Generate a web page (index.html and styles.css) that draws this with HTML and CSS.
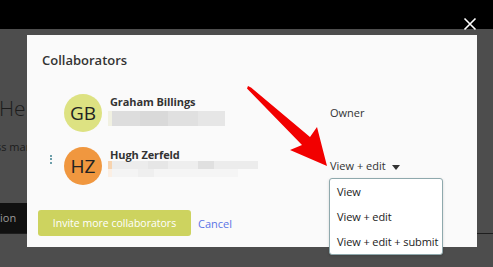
FILE: index.html
```html
<!DOCTYPE html>
<html>
<head>
<meta charset="utf-8">
<link rel="stylesheet" href="styles.css">
</head>
<body>
<div class="page">
  <div class="topbar"></div>
  <div class="behind">
    <div class="hello">Hello</div>
    <div class="sub">ss management</div>
    <div class="actionbar"><span class="actionbtn">ion</span></div>
  </div>

  <div class="modal">
    <h2 class="title">Collaborators</h2>
    <div class="list">
      <div class="row">
        <span class="kebab kebab-hidden"></span>
        <span class="avatar avatar-gb">GB</span>
        <div class="info">
          <div class="name">Graham Billings</div>
          <div class="blur blur-gb"></div>
        </div>
        <div class="role">Owner</div>
      </div>
      <div class="row">
        <span class="kebab"><i></i><i></i><i></i></span>
        <span class="avatar avatar-hz">HZ</span>
        <div class="info">
          <div class="name">Hugh Zerfeld</div>
          <div class="blur blur-hz1"></div>
          <div class="blur blur-hz2"></div>
        </div>
        <div class="role role-select">
          <span>View + edit</span><span class="caret"></span>
          <ul class="menu">
            <li>View</li>
            <li>View + edit</li>
            <li>View + edit + submit</li>
          </ul>
        </div>
      </div>
    </div>
    <div class="footer">
      <button class="invite">Invite more collaborators</button>
      <a class="cancel">Cancel</a>
    </div>
  </div>

  <svg class="close" width="14" height="14" viewBox="0 0 14 14">
    <path d="M1.5 1.5 L12.5 12.5 M12.5 1.5 L1.5 12.5" stroke="#fff" stroke-width="1.6" fill="none"/>
  </svg>

  <svg class="arrow" width="493" height="267" viewBox="0 0 493 267">
    <polygon points="248,86 251,87.5 310,137 317,127 327,166 290,150 302,145 247,88.5" fill="#f20000"/>
  </svg>
</div>
</body>
</html>
```
FILE: styles.css
```css
* { box-sizing: border-box; }
html, body { margin: 0; padding: 0; }
body {
  width: 493px;
  height: 267px;
  overflow: hidden;
  background: #4d4d4d;
  font-family: "Open Sans", "Liberation Sans", sans-serif;
  color: #333;
}
.page {
  position: relative;
  width: 493px;
  height: 267px;
  overflow: hidden;
}
.topbar {
  height: 29px;
  background: #000;
}
.behind {
  display: flex;
  flex-direction: column;
  width: 27px;
  overflow: hidden;
}
.hello {
  margin-top: 66px;
  font-size: 21px;
  line-height: 26px;
  font-weight: 300;
  color: #1c1c1c;
  white-space: nowrap;
  margin-left: -1px;
}
.sub {
  margin-top: 18px;
  font-size: 11px;
  line-height: 16px;
  color: #1c1c1c;
  margin-left: -4px;
  white-space: nowrap;
}
.actionbar {
  margin-top: 48px;
  height: 30px;
  display: flex;
}
.actionbtn {
  width: 27px;
  background: #111;
  color: #9a9a9a;
  font-size: 11px;
  line-height: 30px;
  overflow: hidden;
}
.page::after {
  content: "";
  position: absolute;
  left: 0;
  right: 0;
  top: 233px;
  height: 1px;
  background: #1e1e1e;
}

.modal {
  position: absolute;
  left: 27px;
  top: 35px;
  width: 450px;
  height: 212px;
  background: #fafafa;
  display: flex;
  flex-direction: column;
  z-index: 1;
}
.title {
  margin: 0;
  padding: 17px 15px 0;
  font-size: 13px;
  line-height: 16px;
  font-weight: 600;
  color: #333;
}
.list {
  margin-top: 26px;
  display: flex;
  flex-direction: column;
  gap: 15px;
}
.row {
  display: flex;
  align-items: flex-start;
  padding-left: 23px;
}
.kebab {
  width: 3px;
  margin-right: 11px;
  align-self: center;
  display: flex;
  flex-direction: column;
  gap: 1.5px;
  margin-top: -14px;
}
.kebab i {
  display: block;
  width: 2px;
  height: 2px;
  background: #3d7f8f;
  border-radius: 1px;
}
.avatar {
  width: 38px;
  height: 38px;
  border-radius: 50%;
  margin-right: 8px;
  display: flex;
  align-items: center;
  justify-content: center;
  font-size: 19px;
  color: #222;
  flex: none;
}
.avatar-gb { background: #dde282; }
.avatar-hz { background: #f0973f; }
.info {
  width: 220px;
  padding-top: 1px;
}
.name {
  font-size: 11px;
  line-height: 14px;
  font-weight: 700;
  color: #333;
  letter-spacing: -0.1px;
}
.blur { margin-left: -2px; }
.blur-gb {
  margin-top: 2px;
  width: 117px;
  height: 15px;
  background: linear-gradient(90deg, #f1f1e2 0 4px, #dddddd 4px 32px, #d9d9d9 32px 60px, #e0e0e0 60px 90px, #e6e6e6 90px 117px);
}
.blur-hz1 {
  margin-top: -1px;
  width: 150px;
  height: 8px;
  background: linear-gradient(90deg, #f7d3ae 0 4px, #ececec 4px 40px, #e6e6e6 40px 60px, #eeeeee 60px 90px, #e0e0e0 90px 106px, #ececec 106px 150px);
}
.blur-hz2 {
  width: 130px;
  height: 8px;
  background: linear-gradient(90deg, #fbefe4 0 4px, #f4f4f4 4px 30px, #efefef 30px 46px, #f5f5f5 46px 130px);
}
.role {
  align-self: center;
  font-size: 11px;
  line-height: 16px;
  color: #333;
  position: relative;
}
.role-select { display: flex; align-items: center; }
.caret {
  margin-left: 6px;
  width: 0;
  height: 0;
  border-left: 4.5px solid transparent;
  border-right: 4.5px solid transparent;
  border-top: 5px solid #333;
  margin-top: 2px;
}
.menu {
  position: absolute;
  left: -1px;
  top: 20px;
  width: 114px;
  margin: 0;
  padding: 0;
  list-style: none;
  background: #fff;
  border: 1px solid #8fa9ad;
  border-radius: 3px;
  box-shadow: 0 1px 3px rgba(0,0,0,0.15);
}
.menu li {
  height: 25px;
  line-height: 25px;
  padding-left: 7px;
  font-size: 11px;
  color: #222;
  white-space: nowrap;
  letter-spacing: -0.1px;
}
.footer {
  margin-top: 25px;
  padding-left: 11px;
  display: flex;
  align-items: center;
}
.invite {
  width: 153px;
  height: 26px;
  border: none;
  border-radius: 3px;
  background: #cdd35f;
  color: #fff;
  font-family: inherit;
  font-size: 10.5px;
  padding: 0;
}
.cancel {
  margin-left: 7px;
  font-size: 11px;
  color: #5a73e6;
}
.close {
  position: absolute;
  left: 463px;
  top: 17px;
  z-index: 2;
}
.arrow {
  position: absolute;
  left: 0;
  top: 0;
  pointer-events: none;
  z-index: 2;
}
```
